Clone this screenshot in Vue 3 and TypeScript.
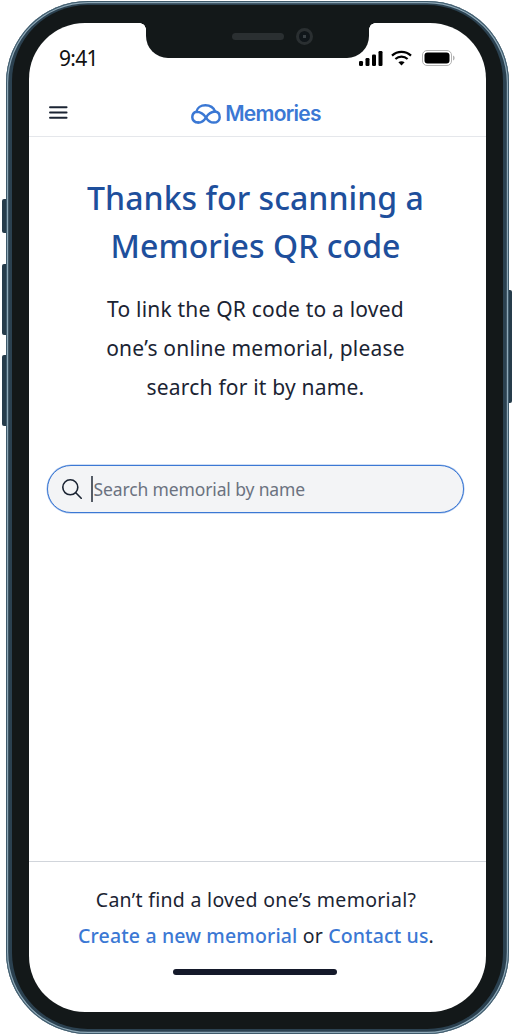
<script setup lang="ts">
const title: string[] = ['Thanks for scanning a', 'Memories QR code']
const body: string[] = ['To link the QR code to a loved', 'one’s online memorial, please', 'search for it by name.']
</script>

<template>
  <div class="stage">
    <div class="phone">
      <span class="btn mute"></span>
      <span class="btn volup"></span>
      <span class="btn voldown"></span>
      <span class="btn power"></span>
      <div class="bezel">
        <div class="notch">
          <span class="speaker"></span>
          <span class="camera"></span>
        </div>
        <div class="screen">
          <div class="status">
            <span class="time">9:41</span>
            <div class="indicators">
              <svg class="signal" width="24" height="15" viewBox="0 0 24 15" fill="#000">
                <rect x="0" y="10" width="4" height="5" rx="1.2" />
                <rect x="6.5" y="7" width="4" height="8" rx="1.2" />
                <rect x="13" y="3.5" width="4" height="11.5" rx="1.2" />
                <rect x="19.5" y="0" width="4" height="15" rx="1.2" />
              </svg>
              <svg class="wifi" width="21" height="16" viewBox="0 0 21 16" fill="none" stroke="#000" stroke-width="2.2">
                <path d="M1 5.6 C6.4 0.6 14.6 0.6 20 5.6" />
                <path d="M4.4 9 C7.9 5.9 13.1 5.9 16.6 9" />
                <path d="M10.5 15.6 L7.4 12.3 C9.2 10.8 11.8 10.8 13.6 12.3 Z" fill="#000" stroke="none" />
              </svg>
              <svg width="33" height="16" viewBox="0 0 33 16">
                <rect x="0.5" y="0.5" width="29" height="15" rx="4.5" fill="#fff" stroke="#b3b3b3" />
                <rect x="2.5" y="2.5" width="25" height="11" rx="3" fill="#000" />
                <path d="M31 5.5 C32.2 6 32.6 7 32.6 8 C32.6 9 32.2 10 31 10.5 Z" fill="#b3b3b3" />
              </svg>
            </div>
          </div>
          <header class="nav">
            <svg class="burger" width="19" height="13" viewBox="0 0 19 13" stroke="#1b2433" stroke-width="1.9" stroke-linecap="round">
              <path d="M1 1.2 H17.6 M1 6.5 H17.6 M1 11.8 H17.6" />
            </svg>
            <div class="logo">
              <svg width="30" height="20" viewBox="0 0 30 20" fill="none" stroke="#3b78d4" stroke-width="2.5" stroke-linejoin="round" stroke-linecap="round">
                <path d="M7.3 18.6 C3.6 18.6 1.3 16.2 1.3 13.2 C1.3 10.4 3 8.2 5.4 7.7 C6.2 3.6 10 1.3 14.4 1.3 C19 1.3 22.6 3.6 24.2 7.6 C27 8 28.7 10.4 28.7 13.2 C28.7 16.2 26.4 18.6 22.7 18.6 C18.6 18.6 16.4 15.8 15 13.6 C13.4 11 11 7.8 5.4 7.7" />
                <path d="M7.3 18.6 C11.4 18.6 13.6 15.8 15 13.6 C16.6 11 19 7.8 24.2 7.6" />
              </svg>
              <span class="logo-text">Memories</span>
            </div>
          </header>
          <main class="main">
            <h1 class="title">
              <span v-for="line in title" :key="line">{{ line }}</span>
            </h1>
            <p class="body">
              <span v-for="line in body" :key="line">{{ line }}</span>
            </p>
            <div class="search">
              <svg width="20" height="20" viewBox="0 0 20 20" fill="none" stroke="#1b2433" stroke-width="1.6" stroke-linecap="round">
                <circle cx="8.3" cy="8.3" r="7.5" />
                <path d="M13.8 13.8 L19.2 19.2" />
              </svg>
              <span class="caret"></span>
              <span class="placeholder">Search memorial by name</span>
            </div>
          </main>
          <footer class="foot">
            <p class="foot-text first">Can’t find a loved one’s memorial?</p>
            <p class="foot-text second"><a class="link">Create a new memorial</a> or <a class="link">Contact us</a>.</p>
          </footer>
          <div class="home-wrap"><span class="home"></span></div>
        </div>
      </div>
    </div>
  </div>
</template>

<style>
html, body { margin: 0; background: #fff; }
</style>

<style scoped>
.stage {
  width: 512px;
  height: 1036px;
  background: #fff;
  padding: 1px 3px 2px 6px;
  box-sizing: border-box;
  font-family: "Noto Sans", sans-serif;
}
.phone {
  position: relative;
  width: 503px;
  height: 1033px;
  box-sizing: border-box;
  border-radius: 82px;
  background: #2b4150;
  padding: 4px 6px 5px;
  box-shadow: inset 0 0 0 1px #3f5a6b, inset 0 0 0 2.2px #8fa9b8;
}
.btn {
  position: absolute;
  background: #263c4b;
}
.mute, .volup, .voldown { left: -4px; width: 4px; border-radius: 2px 0 0 2px; }
.mute { top: 198px; height: 34px; }
.volup { top: 263px; height: 71px; }
.voldown { top: 354px; height: 71px; }
.power { right: -3px; top: 289px; height: 113px; width: 3px; border-radius: 0 2px 2px 0; }
.bezel {
  position: relative;
  height: 100%;
  box-sizing: border-box;
  border-radius: 76px;
  background: #131819;
  padding: 18px 17px 17px;
}
.notch {
  position: absolute;
  top: 0;
  left: 134px;
  width: 223px;
  height: 53px;
  background: #131819;
  border-radius: 0 0 22px 22px;
  display: flex;
  align-items: center;
  justify-content: center;
  gap: 12px;
  padding: 10px 0 0 29px;
  box-sizing: border-box;
  z-index: 2;
}
.notch::before,
.notch::after {
  content: "";
  position: absolute;
  top: 18px;
  width: 6px;
  height: 6px;
}
.notch::before {
  left: -6px;
  background: radial-gradient(circle at 0 100%, transparent 5.5px, #131819 6px);
}
.notch::after {
  right: -6px;
  background: radial-gradient(circle at 100% 100%, transparent 5.5px, #131819 6px);
}
.speaker { width: 52px; height: 7px; border-radius: 4px; background: #2a2f31; }
.camera {
  width: 17px;
  height: 17px;
  border-radius: 50%;
  background: radial-gradient(circle at 50% 50%, #3a4145 0 1.5px, #10161a 2px);
  border: 3px solid #2a2f31;
  box-sizing: border-box;
}
.screen {
  height: 100%;
  background: #fff;
  border-radius: 56px;
  display: flex;
  flex-direction: column;
  overflow: hidden;
}
.status {
  height: 69px;
  flex: none;
  display: flex;
  justify-content: space-between;
  padding: 23px 30px 0 30px;
  box-sizing: border-box;
}
.time { font: 400 21px/24px "Noto Sans", sans-serif; color: #111; letter-spacing: -0.7px; }
.indicators { display: flex; gap: 8px; align-items: flex-start; height: 20px; padding-top: 4px; margin-right: 1px; }
.signal { margin-top: 1px; }
.wifi { margin-right: 2px; }
.nav {
  height: 45px;
  flex: none;
  position: relative;
  display: flex;
  align-items: center;
  justify-content: center;
  border-bottom: 1px solid #e5e7eb;
  box-sizing: border-box;
  padding-right: 3px;
}
.burger { position: absolute; left: 20px; top: 14px; }
.logo { display: flex; align-items: center; gap: 4px; }
.logo-text { font: 600 21px/24px Inter, sans-serif; color: #3b78d4; letter-spacing: -0.75px; }
.main {
  flex: 1;
  display: flex;
  flex-direction: column;
  align-items: center;
  padding: 37px 26px 0 22px;
  box-sizing: border-box;
}
.title {
  margin: 0;
  display: flex;
  flex-direction: column;
  align-items: center;
  font-size: 32px;
  line-height: 48px;
  font-weight: 500;
  color: #1e4f9c;
  letter-spacing: 0.05px;
}
.body {
  margin: 20px 0 0;
  display: flex;
  flex-direction: column;
  align-items: center;
  font-size: 21px;
  line-height: 39px;
  color: #1b2433;
  letter-spacing: 0.2px;
}
.search {
  margin-top: 58px;
  width: 417px;
  height: 48px;
  flex: none;
  box-sizing: border-box;
  border: 1px solid #3b78d4;
  box-shadow: 0 0 0 0.5px rgba(59, 120, 212, 0.5);
  border-radius: 24px;
  background: #f3f4f6;
  display: flex;
  align-items: center;
  padding-left: 14px;
}
.caret { width: 2px; height: 26px; background: #555c66; margin-left: 8.5px; }
.placeholder { font-size: 17.5px; color: #6b7280; margin-left: 1px; letter-spacing: -0.13px; }
.foot {
  flex: none;
  height: 108px;
  border-top: 1px solid #d1d5db;
  box-sizing: border-box;
  padding: 20px 3px 0 0;
}
.foot-text {
  margin: 0;
  text-align: center;
  font-size: 19.5px;
  line-height: 36px;
  color: #1b2433;
}
.first { letter-spacing: 0.29px; }
.second { letter-spacing: 0.15px; }
.link { color: #3b78d4; font-weight: 500; }
.home-wrap {
  flex: none;
  height: 43px;
  display: flex;
  justify-content: center;
  padding-right: 6px;
}
.home { width: 164px; height: 6px; background: #14192a; border-radius: 3px; }
</style>
